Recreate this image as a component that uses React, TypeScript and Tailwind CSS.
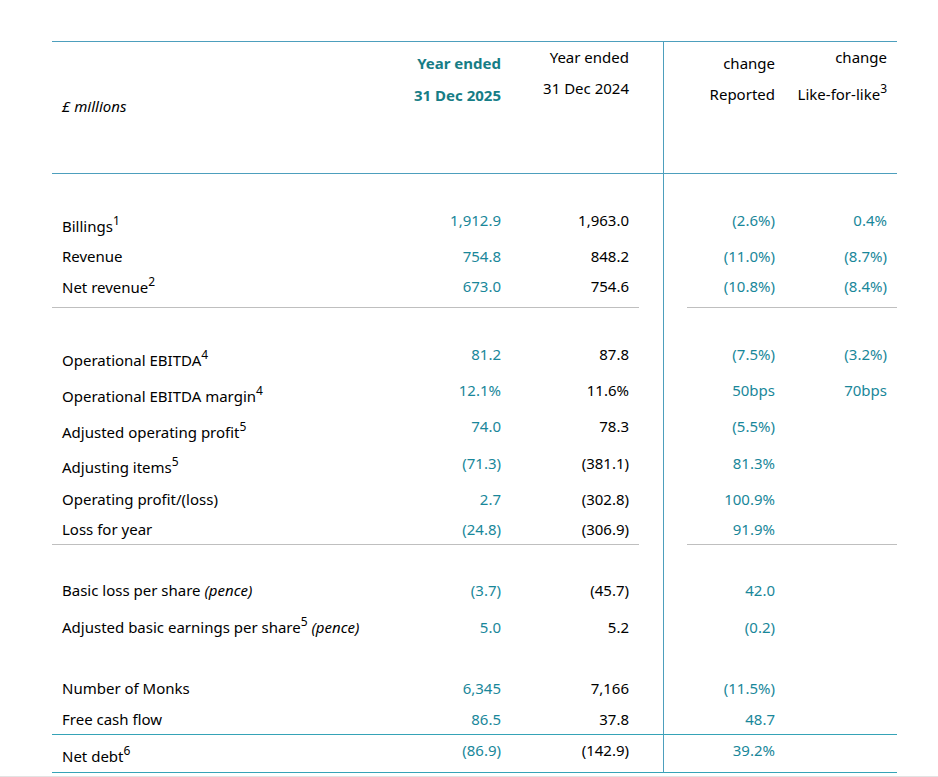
import type { ReactNode } from 'react';

interface Row {
  label: ReactNode;
  cur: string;
  prev: string;
  rep?: string;
  lfl?: string;
  h: string;
  pt: string;
  lpt: string;
  border?: 'gray' | 'teal';
}

const cols = 'grid grid-cols-[348px_111px_128px_24px_24px_98px_112px]';

function Sup({ n }: { n: number }) {
  return <sup className="text-[12px] top-[-0.6em]">{n}</sup>;
}

const sections: Row[][] = [
  [
    { label: <>Billings<Sup n={1} /></>, cur: '1,912.9', prev: '1,963.0', rep: '(2.6%)', lfl: '0.4%', h: 'h-[67px]', pt: 'pt-[36px]', lpt: 'pt-[42px]' },
    { label: 'Revenue', cur: '754.8', prev: '848.2', rep: '(11.0%)', lfl: '(8.7%)', h: 'h-[30px]', pt: 'pt-[5px]', lpt: 'pt-[5px]' },
    { label: <>Net revenue<Sup n={2} /></>, cur: '673.0', prev: '754.6', rep: '(10.8%)', lfl: '(8.4%)', h: 'h-[37px]', pt: 'pt-[5px]', lpt: 'pt-[6px]', border: 'gray' },
  ],
  [
    { label: <>Operational EBITDA<Sup n={4} /></>, cur: '81.2', prev: '87.8', rep: '(7.5%)', lfl: '(3.2%)', h: 'h-[64px]', pt: 'pt-[36px]', lpt: 'pt-[42px]' },
    { label: <>Operational EBITDA margin<Sup n={4} /></>, cur: '12.1%', prev: '11.6%', rep: '50bps', lfl: '70bps', h: 'h-[36px]', pt: 'pt-[8px]', lpt: 'pt-[14px]' },
    { label: <>Adjusted operating profit<Sup n={5} /></>, cur: '74.0', prev: '78.3', rep: '(5.5%)', h: 'h-[36px]', pt: 'pt-[8px]', lpt: 'pt-[14px]' },
    { label: <>Adjusting items<Sup n={5} /></>, cur: '(71.3)', prev: '(381.1)', rep: '81.3%', h: 'h-[37px]', pt: 'pt-[9px]', lpt: 'pt-[13px]' },
    { label: 'Operating profit/(loss)', cur: '2.7', prev: '(302.8)', rep: '100.9%', h: 'h-[33px]', pt: 'pt-[8px]', lpt: 'pt-[8px]' },
    { label: 'Loss for year', cur: '(24.8)', prev: '(306.9)', rep: '91.9%', h: 'h-[31px]', pt: 'pt-[5px]', lpt: 'pt-[5px]', border: 'gray' },
  ],
  [
    { label: <>Basic loss per share <i>(pence)</i></>, cur: '(3.7)', prev: '(45.7)', rep: '42.0', h: 'h-[64px]', pt: 'pt-[35px]', lpt: 'pt-[35px]' },
    { label: <>Adjusted basic earnings per share<Sup n={5} /> <i>(pence)</i></>, cur: '5.0', prev: '5.2', rep: '(0.2)', h: 'h-[36px]', pt: 'pt-[8px]', lpt: 'pt-[8px]' },
  ],
  [
    { label: 'Number of Monks', cur: '6,345', prev: '7,166', rep: '(11.5%)', h: 'h-[59px]', pt: 'pt-[33px]', lpt: 'pt-[33px]' },
    { label: 'Free cash flow', cur: '86.5', prev: '37.8', rep: '48.7', h: 'h-[31px]', pt: 'pt-[5px]', lpt: 'pt-[5px]', border: 'teal' },
    { label: <>Net debt<Sup n={6} /></>, cur: '(86.9)', prev: '(142.9)', rep: '39.2%', h: 'h-[38px]', pt: 'pt-[5px]', lpt: 'pt-[11px]', border: 'teal' },
  ],
];

function TableRow({ r }: { r: Row }) {
  const gray = r.border === 'gray' ? 'border-b border-[#bfbfbf]' : '';
  const teal = r.border === 'teal' ? 'border-b border-[#35a3b7]' : '';
  const cell = `${gray} ${teal}`;
  const gapCell = teal;
  return (
    <div className={`${cols} ${r.h}`}>
      <div className={`${cell} pl-[10px] ${r.lpt} whitespace-nowrap`}>{r.label}</div>
      <div className={`${cell} pr-[10px] ${r.pt} text-right text-[#19879a]`}>{r.cur}</div>
      <div className={`${cell} pr-[10px] ${r.pt} text-right`}>{r.prev}</div>
      <div className={gapCell} />
      <div className={`${gapCell} border-l border-l-[#4d9fbd]`} />
      <div className={`${cell} pr-[10px] ${r.pt} text-right text-[#19879a]`}>{r.rep ?? ''}</div>
      <div className={`${cell} pr-[10px] ${r.pt} text-right text-[#19879a]`}>{r.lfl ?? ''}</div>
    </div>
  );
}

export default function App() {
  return (
    <div className="h-[777px] w-[938px] bg-white text-[15px] leading-[20px] text-black font-['Noto_Sans',sans-serif] pt-[41px] flex flex-col">
      <div className="ml-[52px] w-[845px] border-t border-[#4d9fbd]">
        <div className={`${cols} h-[132px] border-b border-[#4d9fbd]`}>
          <div className="pl-[10px] pt-[54px] italic">£ millions</div>
          <div className="pr-[10px] pt-[11px] text-right font-bold text-[#167d86] flex flex-col gap-[12px]">
            <span>Year ended</span>
            <span>31 Dec 2025</span>
          </div>
          <div className="pr-[10px] pt-[5px] text-right flex flex-col gap-[11px]">
            <span>Year ended</span>
            <span>31 Dec 2024</span>
          </div>
          <div />
          <div className="border-l border-[#4d9fbd]" />
          <div className="pr-[10px] pt-[11px] text-right flex flex-col gap-[11px]">
            <span>change</span>
            <span>Reported</span>
          </div>
          <div className="pr-[10px] pt-[5px] text-right flex flex-col gap-[17px]">
            <span>change</span>
            <span>Like-for-like<Sup n={3} /></span>
          </div>
        </div>
        {sections.map((s, i) => (
          <div key={i}>
            {s.map((r, j) => (
              <TableRow key={j} r={r} />
            ))}
          </div>
        ))}
      </div>
      <div className="mt-[3px] h-px w-full bg-[#e3e3e3]" />
    </div>
  );
}
